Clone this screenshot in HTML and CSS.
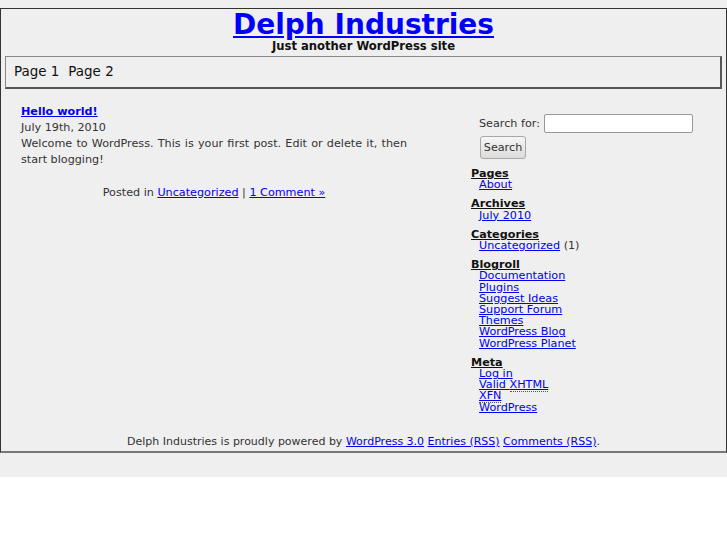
FILE: index.html
```html
<!DOCTYPE html>
<html lang="en">
<head>
<meta charset="utf-8">
<title>Delph Industries</title>
<link rel="stylesheet" href="styles.css">
</head>
<body>
<div class="page">
  <header class="header">
    <h1 class="site-title"><a href="#">Delph Industries</a></h1>
    <div class="site-desc">Just another WordPress site</div>
  </header>
  <nav class="nav">
    <span class="nav-item">Page 1</span>
    <span class="nav-item">Page 2</span>
  </nav>
  <div class="main">
    <div class="content">
      <div class="post">
        <h2 class="post-title"><a href="#">Hello world!</a></h2>
        <div class="post-date">July 19th, 2010</div>
        <p class="post-body">Welcome to WordPress. This is your first post. Edit or delete it, then start blogging!</p>
        <p class="post-meta">Posted in <a href="#">Uncategorized</a> | <a href="#">1 Comment &raquo;</a></p>
      </div>
    </div>
    <aside class="sidebar">
      <form class="search">
        <div class="search-row">
          <label class="search-label">Search for:</label>
          <input class="search-input" type="text">
        </div>
        <button class="search-btn" type="button">Search</button>
      </form>
      <div class="widget">
        <h3 class="widget-title">Pages</h3>
        <ul class="widget-list"><li><a href="#">About</a></li></ul>
      </div>
      <div class="widget">
        <h3 class="widget-title">Archives</h3>
        <ul class="widget-list"><li><a href="#">July 2010</a></li></ul>
      </div>
      <div class="widget">
        <h3 class="widget-title">Categories</h3>
        <ul class="widget-list"><li><a href="#">Uncategorized</a> (1)</li></ul>
      </div>
      <div class="widget">
        <h3 class="widget-title">Blogroll</h3>
        <ul class="widget-list">
          <li><a href="#">Documentation</a></li>
          <li><a href="#">Plugins</a></li>
          <li><a href="#">Suggest Ideas</a></li>
          <li><a href="#">Support Forum</a></li>
          <li><a href="#">Themes</a></li>
          <li><a href="#">WordPress Blog</a></li>
          <li><a href="#">WordPress Planet</a></li>
        </ul>
      </div>
      <div class="widget">
        <h3 class="widget-title">Meta</h3>
        <ul class="widget-list">
          <li><a href="#">Log in</a></li>
          <li><a href="#">Valid <abbr class="abbr" title="eXtensible HyperText Markup Language">XHTML</abbr></a></li>
          <li><a href="#"><abbr class="abbr" title="XHTML Friends Network">XFN</abbr></a></li>
          <li><a href="#">WordPress</a></li>
        </ul>
      </div>
    </aside>
  </div>
  <footer class="footer">
    Delph Industries is proudly powered by <a href="#">WordPress 3.0</a> <a href="#">Entries (RSS)</a> <a href="#">Comments (RSS)</a>.
  </footer>
</div>
</body>
</html>
```
FILE: styles.css
```css
html {
  background: #ffffff;
}
body {
  margin: 0;
  padding: 8px 0 24px;
  background: #efefef;
  font-family: "DejaVu Sans", "Bitstream Vera Sans", sans-serif;
  font-size: 11.2px;
  color: #333;
}
a {
  color: #0000ee;
}
.page {
  border: 1px solid #333;
  border-bottom: 2px solid #777;
}
.header {
  text-align: center;
}
.site-title {
  margin: 0;
  padding-top: 1px;
  font-size: 28px;
  line-height: 30px;
  font-weight: bold;
}
.site-title a {
  color: #0000ff;
}
.site-desc {
  font-size: 11.6px;
  font-weight: bold;
  line-height: 12px;
  color: #111;
}
.nav {
  margin: 4px 4px 0;
  border: 1px solid #888;
  border-right: 2px solid #555;
  border-bottom: 2px solid #555;
  padding: 7px 8px;
  display: flex;
  gap: 9px;
  font-size: 13.44px;
  line-height: 16px;
  color: #111;
}
.main {
  display: flex;
  align-items: flex-start;
  margin-top: 15px;
}
.content {
  margin-left: 20px;
  width: 386px;
}
.post-title {
  margin: 0;
  font-size: 11.2px;
  line-height: 16px;
  font-weight: bold;
}
.post-date {
  line-height: 16px;
}
.post-body {
  margin: 0;
  line-height: 16px;
  text-align: justify;
}
.post-meta {
  margin: 17px 0 0;
  line-height: 16px;
  text-align: center;
}
.sidebar {
  margin-left: 64px;
  width: 240px;
  padding-top: 10px;
}
.search {
  margin: 0 0 9px;
  padding-left: 8px;
}
.search-row {
  display: flex;
  align-items: center;
  gap: 4px;
}
.search-label {
  line-height: 19px;
}
.search-input {
  box-sizing: border-box;
  width: 149px;
  height: 19px;
  margin: 0;
  border: 1px solid #999;
  border-radius: 2px;
  background: #fff;
}
.search-btn {
  display: block;
  box-sizing: border-box;
  margin: 3px 0 0 1px;
  width: 46px;
  height: 23px;
  padding: 0;
  border: 1px solid #a8a8a8;
  border-radius: 3px;
  background: linear-gradient(#f6f6f6, #dcdcdc);
  font-family: "DejaVu Sans", sans-serif;
  font-size: 11.2px;
  color: #333;
}
.widget {
  margin-bottom: 8px;
}
.widget-title {
  margin: 0;
  font-size: 11.2px;
  line-height: 11.2px;
  font-weight: bold;
  text-decoration: underline;
  color: #111;
}
.widget-list {
  margin: 0;
  padding: 0 0 0 8px;
  list-style: none;
  line-height: 11.2px;
}
.abbr {
  text-decoration: none;
  border-bottom: 1px dotted #555;
}
.footer {
  margin-top: 13px;
  padding-bottom: 1px;
  line-height: 16px;
  font-size: 11px;
  text-align: center;
}
```
